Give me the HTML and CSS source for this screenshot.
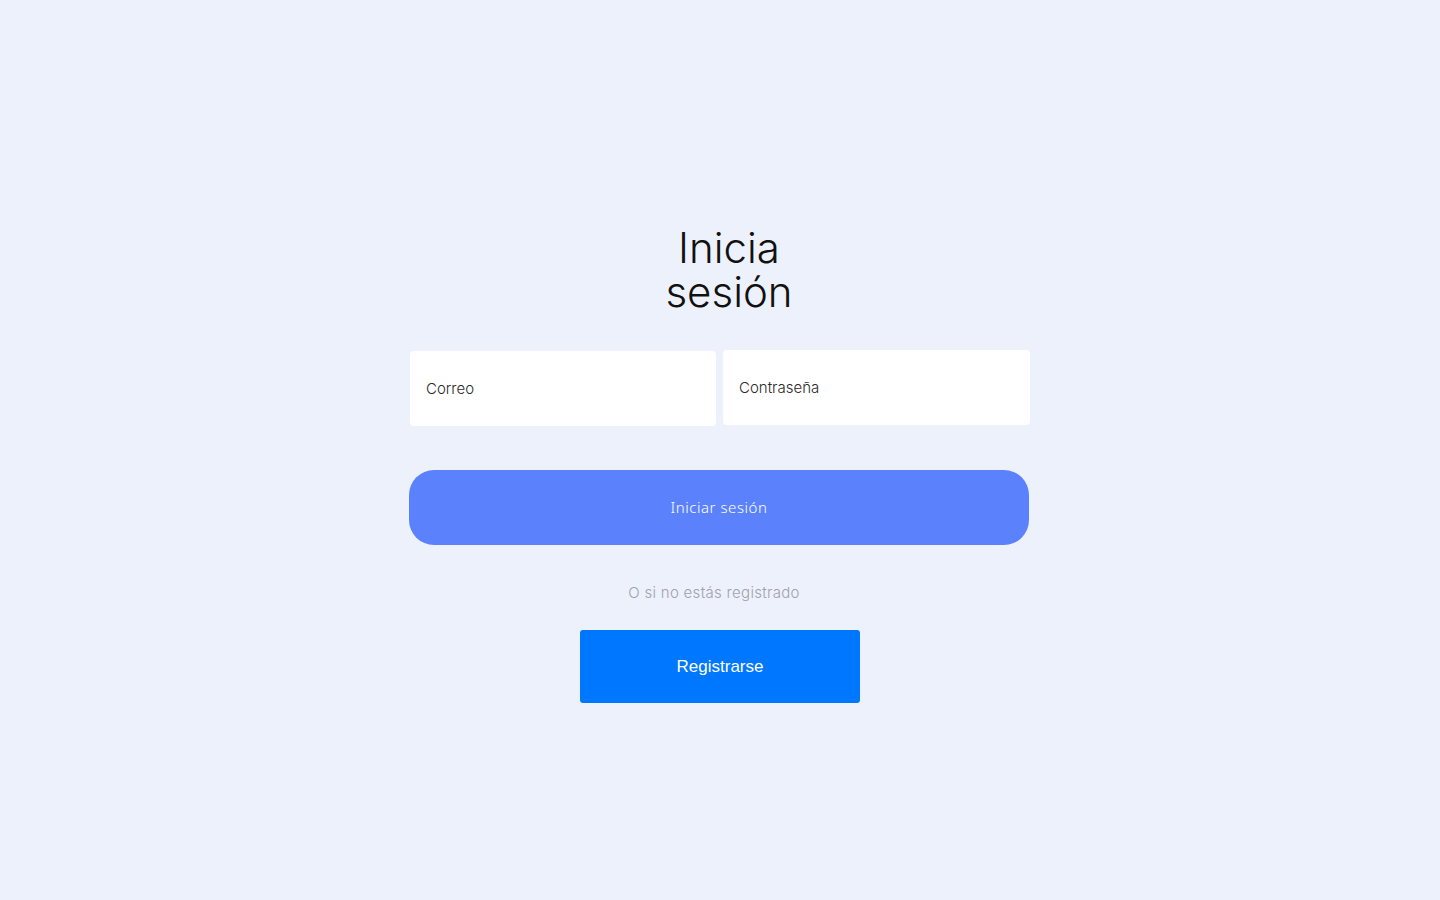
FILE: index.html
```html
<!DOCTYPE html>
<html lang="es">
<head>
<meta charset="utf-8">
<title>Inicia sesión</title>
<link rel="stylesheet" href="styles.css">
</head>
<body>
<main class="page">
  <form class="login">
    <h1 class="title"><span class="title-line">Inicia</span><span class="title-line">sesión</span></h1>
    <div class="fields">
      <input class="field field-mail" type="text" placeholder="Correo">
      <input class="field field-pass" type="password" placeholder="Contraseña">
    </div>
    <button class="btn-login" type="button">Iniciar sesión</button>
    <p class="alt">O si no estás registrado</p>
    <button class="btn-register" type="button">Registrarse</button>
  </form>
</main>
</body>
</html>
```
FILE: styles.css
```css
* { box-sizing: border-box; }
html, body {
  margin: 0;
  padding: 0;
  background: #edf1fc;
  font-family: "Inter", "Noto Sans", sans-serif;
}
.page {
  height: 900px;
  display: flex;
  justify-content: center;
}
.login {
  width: 622px;
  padding-top: 226px;
  display: flex;
  flex-direction: column;
  align-items: center;
}
.title {
  margin: 0 0 0 18px;
  font-weight: 300;
  font-size: 42px;
  line-height: 44px;
  color: #111;
  text-align: center;
  display: flex;
  flex-direction: column;
  align-items: center;
}
.title-line { display: block; height: 44px; }
.fields {
  margin-top: 36px;
  width: 100%;
  display: flex;
  gap: 7px;
  align-items: flex-start;
  padding-left: 1px;
}
.field {
  width: 306px;
  height: 75px;
  border: none;
  border-radius: 4px;
  background: #fff;
  padding: 0 16px;
  font-family: inherit;
  font-size: 15px;
  font-weight: 300;
  color: #333;
  outline: none;
}
.field::placeholder { color: #2a2a2a; }
.field-mail { margin-top: 1px; }
.field-pass { width: 307px; }
.btn-login {
  margin-top: 44px;
  width: 620px;
  height: 75px;
  border: none;
  border-radius: 25px;
  background: #5b82fc;
  color: #fff;
  font-family: "Noto Sans", sans-serif;
  font-size: 15px;
  font-weight: 300;
  letter-spacing: 0.55px;
  align-self: flex-start;
  padding-bottom: 2px;
}
.alt {
  margin: 38px 0 0 -12px;
  font-size: 15px;
  font-weight: 300;
  letter-spacing: 0.3px;
  color: #9ea2ab;
  line-height: 20px;
}
.btn-register {
  margin-top: 27px;
  width: 280px;
  height: 73px;
  border: none;
  border-radius: 3px;
  background: #0077ff;
  color: #fff;
  font-family: "Liberation Sans", Arial, sans-serif;
  font-size: 17px;
}
```
